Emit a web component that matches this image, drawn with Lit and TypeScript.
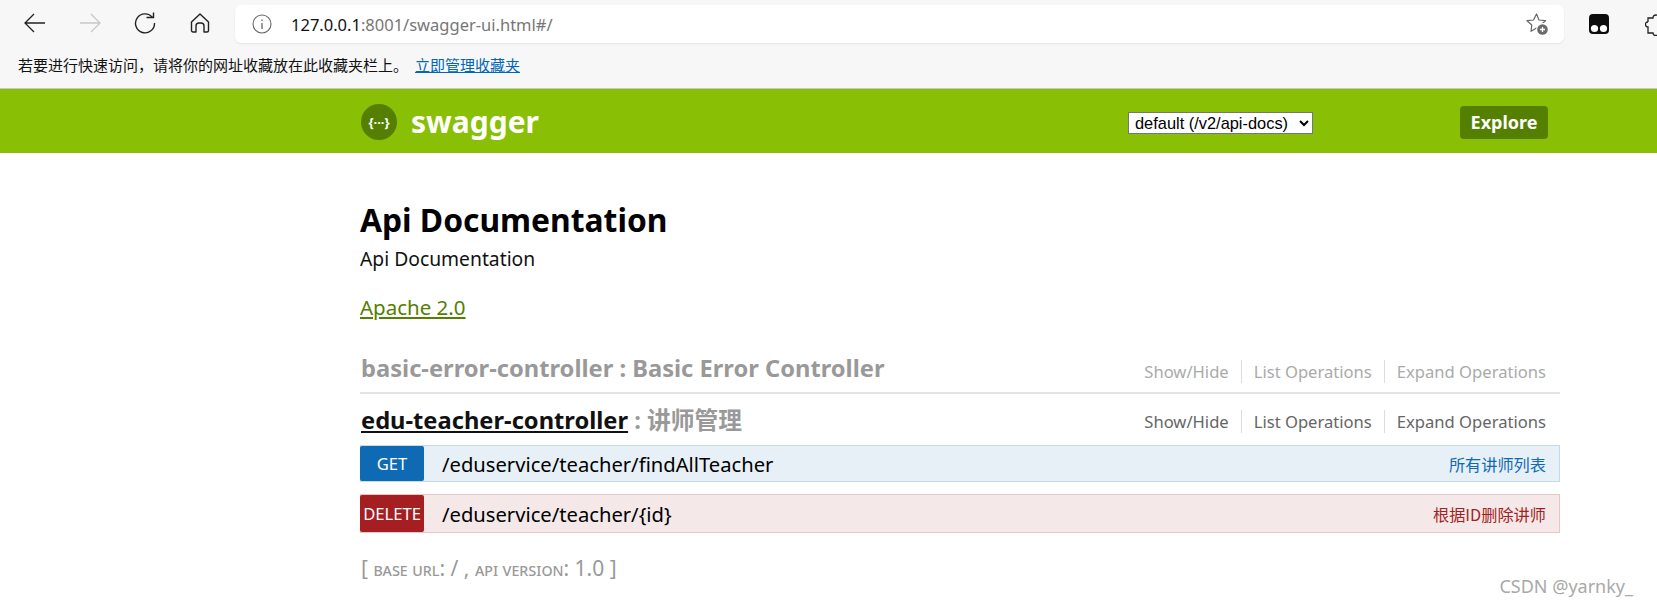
import { LitElement, html, css } from "lit";
import { customElement } from "lit/decorators.js";

const ops = html`<ul class="ops">
  <li>Show/Hide</li><li>List Operations</li><li>Expand Operations</li>
</ul>`;

@customElement("app-root")
export class AppRoot extends LitElement {
  static styles = css`
    :host { display: block; width: 1657px; height: 608px; overflow: hidden; background: #fff;
      font-family: "Noto Sans", "Noto Sans CJK SC", sans-serif; position: relative; }
    * { box-sizing: border-box; }
    .toolbar { height: 49px; background: #f7f7f7; display: flex; align-items: flex-start; padding-top: 5px; overflow: hidden; }
    .nav { flex: none; display: flex; align-items: center; height: 36px; }
    .nav svg { display: block; flex: none; }
    .back { margin-left: 24px; } .fwd { margin-left: 33px; } .reload { margin-left: 33px; } .home { margin-left: 34px; }
    .omni { flex: none; margin-left: 25px; width: 1329px; height: 38px; background: #fff; border-radius: 6px;
      box-shadow: 0 1px 2px rgba(0,0,0,.08); display: flex; align-items: center; padding-left: 17px; padding-right: 14px; font-size: 16.5px; }
    .url { margin-left: 19px; color: #767676; flex: 1; font-family: "Noto Sans", sans-serif; }
    .url b { font-weight: 400; color: #111; }
    .ext { flex: none; }
    .tm { margin: 9px 0 0 25px; flex: none; } .puzzle { margin: 9px 0 0 36px; flex: none; }
    .favbar { height: 40px; background: #f7f7f7; border-bottom: 1px solid #c8c8c8; display: flex; align-items: center; padding: 0 0 9px 18px;
      font-size: 15px; color: #111; font-family: "Noto Sans CJK SC", sans-serif; }
    .favbar a { margin-left: 7px; color: #0067b8; text-decoration: underline; }
    .header { height: 64px; background: #89bf04; padding-left: 361px; display: flex; align-items: center; position: relative; }
    .logo { display: flex; align-items: center; width: 767px; gap: 14px; color: #fff; font-weight: 700; font-size: 30px; margin-top: 2px; }
    .logo svg { display: block; }
    .logo span { position: relative; top: -1px; }
    select { width: 185px; height: 22px; font: 16.4px "Liberation Sans", sans-serif; background: #fff; color: #000; border: 1px solid #767676; padding: 0 0 0 2px; border-radius: 0; margin-top: 3px; }
    .explore { margin-left: 147px; width: 88px; height: 33px; background: #547f00; color: #fff; font-weight: 700; font-size: 18px; border-radius: 4px; display: flex; align-items: center; justify-content: center; margin-top: 2px; }
    main { width: 1200px; margin-left: 360px; }
    h1 { margin: 44px 0 0; font-size: 31.8px; line-height: 46px; font-weight: 700; color: #000; }
    .desc { font-size: 19.3px; line-height: 26px; margin-top: 3px; color: #111; }
    .lic { display: block; font-size: 20.5px; line-height: 26px; margin-top: 22px; color: #547f00; text-decoration: underline; width: max-content; }
    .res { display: flex; justify-content: space-between; align-items: center; }
    .res h2 { margin: 0 0 0 1px; font-size: 23.7px; font-weight: 700; line-height: 34px; color: #999; }
    .res1 { margin-top: 30px; height: 44px; border-bottom: 2px solid #e4e4e4; padding-bottom: 7px; }
    .res2 { height: 51px; }
    .res2 h2 u { color: #111; }
    .ops { display: flex; list-style: none; margin: 4px 0 0; padding: 0 14px 0 0; font-size: 16.6px; line-height: 23px; color: #666; }
    .ops li { padding: 0 12px; border-right: 1px solid #ddd; }
    .ops li:last-child { border: none; padding-right: 0; }
    .res1 .ops { color: #aaa; margin-top: 8px; }
    .op { height: 37px; display: flex; align-items: stretch; border: 1px solid; font-size: 20.2px; color: #000; position: relative; }
    .get { background: #e7f0f7; border-color: #c3d9ec; }
    .del { background: #f5e8e8; border-color: #e8c6c7; margin-top: 12px; height: 39px; }
    .m { width: 64px; margin: 0 0 0 -1px; color: #fff; border-radius: 2px; display: flex; align-items: center; justify-content: center; font-size: 16.6px; flex: none; }
    .get .m { background: #0f6ab4; } .del .m { background: #a41e22; }
    .path { margin-left: 18px; flex: 1; display: flex; align-items: center; }
    .sum { padding-right: 13px; display: flex; align-items: center; font-size: 16.2px; font-family: "Noto Sans CJK SC", sans-serif; }
    .get .sum { color: #0f6ab4; } .del .sum { color: #a41e22; }
    .foot { margin-top: 21px; margin-left: 1px; color: #999; font-size: 21px; line-height: 28px; }
    .foot small { font-variant: small-caps; font-size: 17.6px; }
    .wm { position: absolute; right: 24px; bottom: 9px; color: #a9a9a9; font-size: 18px; line-height: 26px; }
  `;
  render() {
    return html`
      <div class="toolbar">
        <div class="nav">
          <svg class="back" width="22" height="22" viewBox="0 0 22 22" fill="none" stroke="#222" stroke-width="1.3"><path d="M1 11h20M10 2l-9 9 9 9"/></svg>
          <svg class="fwd" width="22" height="22" viewBox="0 0 22 22" fill="none" stroke="#c8c8c8" stroke-width="1.3"><path d="M1 11h20M12 2l9 9-9 9"/></svg>
          <svg class="reload" width="22" height="22" viewBox="0 0 22 22" fill="none" stroke="#222" stroke-width="1.4"><path d="M18.500 5.500A9.500 9.500 0 1 0 20.500 11"/><path d="M12.500 5.500h7v-5"/></svg>
          <svg class="home" width="20" height="20" viewBox="0 0 20 20" fill="none" stroke="#222" stroke-width="1.4" stroke-linejoin="round"><path d="M1.500 9 10 1l8.500 8v8.500a1.500 1.500 0 0 1-1.500 1.500h-3V13a3 3 0 0 0-3-3H9a3 3 0 0 0-3 3v6H3a1.500 1.500 0 0 1-1.500-1.500z"/></svg>
        </div>
        <div class="omni">
          <svg width="20" height="20" viewBox="0 0 20 20" fill="none" stroke="#666" stroke-width="1.1"><circle cx="10" cy="10" r="9"/><path d="M10 9v6M10 5.500v1.500" stroke-width="1.300"/></svg>
          <span class="url"><b>127.0.0.1</b>:8001/swagger-ui.html#/</span>
          <svg class="ext" width="24" height="24" viewBox="0 0 24 24"><path d="M10.500 2 13 8l6.500.7-4.800 4.300 1.300 6.300-5.500-3.200-5.500 3.200L5.800 13 1 8.700 7.500 8z" fill="none" stroke="#666" stroke-width="1.200" stroke-linejoin="round"/><circle cx="16.500" cy="17.500" r="6.500" fill="#fff"/><circle cx="16.500" cy="17.500" r="5.300" fill="#6a6a6a"/><path d="M16.500 15v5M14 17.500h5" stroke="#fff" stroke-width="1.300"/></svg>
        </div>
        <svg class="tm" width="20" height="20" viewBox="0 0 20 20"><rect width="20" height="20" rx="4" fill="#0c0c0c"/><circle cx="5.500" cy="14.500" r="3.600" fill="#fff"/><circle cx="14.500" cy="14.500" r="3.600" fill="#fff"/></svg>
        <svg class="puzzle" width="22" height="22" viewBox="0 0 22 22" fill="none" stroke="#222" stroke-width="1.300"><path d="M3 8c-2 0-2.500 1-2.500 2.500S1.500 13 3 13v6h5c0 1.500 1 2.500 3 2.500s3-1 3-2.500h5v-6"/><path d="M3 8V4h5c0-2 1-3 3-3s3 1 3 3h5v4"/></svg>
      </div>
      <div class="favbar">若要进行快速访问，请将你的网址收藏放在此收藏夹栏上。<a>立即管理收藏夹</a></div>
      <header class="header">
        <div class="logo">
          <svg width="36" height="36" viewBox="0 0 36 36"><circle cx="18" cy="18" r="18" fill="#547f00"/><text x="18" y="22.500" text-anchor="middle" font-size="13" font-weight="700" fill="#fff" font-family="'Noto Sans',sans-serif">{···}</text></svg>
          <span>swagger</span>
        </div>
        <select><option>default (/v2/api-docs)</option></select>
        <div class="explore">Explore</div>
      </header>
      <main>
        <h1>Api Documentation</h1>
        <div class="desc">Api Documentation</div>
        <a class="lic">Apache 2.0</a>
        <div class="res res1"><h2>basic-error-controller : Basic Error Controller</h2>${ops}</div>
        <div class="res res2"><h2><u>edu-teacher-controller</u> : 讲师管理</h2>${ops}</div>
        <div class="op get"><span class="m">GET</span><span class="path">/eduservice/teacher/findAllTeacher</span><span class="sum">所有讲师列表</span></div>
        <div class="op del"><span class="m">DELETE</span><span class="path">/eduservice/teacher/{id}</span><span class="sum">根据ID删除讲师</span></div>
        <div class="foot">[ <small>base url</small>: / , <small>api version</small>: 1.0 ]</div>
      </main>
      <div class="wm">CSDN @yarnky_</div>
    `;
  }
}
